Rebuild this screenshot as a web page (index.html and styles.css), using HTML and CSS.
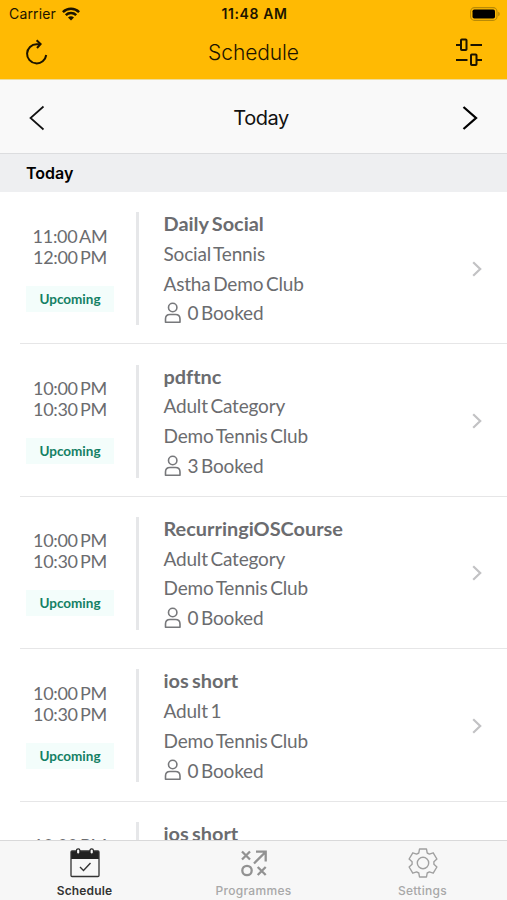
FILE: index.html
```html
<!DOCTYPE html>
<html lang="en">
<head>
  <meta charset="UTF-8" />
  <title>Schedule</title>
  <link rel="stylesheet" href="styles.css">
</head>
<body>

<!-- Header -->
<header>
  <div class="status-bar">
    <div class="carrier">
      <span>Carrier</span>
      <svg width="18" height="14" viewBox="0 0 18 14" fill="none" stroke="#1c1400" stroke-width="2.5">
        <path d="M0.9 5.2A11.5 11.5 0 0 1 17.1 5.2" />
        <path d="M3.8 8.2A7.4 7.4 0 0 1 14.2 8.2" />
        <path d="M9 13.4L6 10.6A4.4 4.4 0 0 1 12 10.6Z" fill="#1c1400" stroke="none" />
      </svg>
    </div>
    <span class="clock">11:48 AM</span>
    <svg class="battery" width="30" height="14" viewBox="0 0 30 14">
      <rect x="0.6" y="0.6" width="26.4" height="12.8" rx="4" fill="none" stroke="#b98a06" stroke-width="1.1" />
      <rect x="2.5" y="2.4" width="22.5" height="9.2" rx="1.8" fill="#000" />
      <path d="M28.2 4.7Q29.8 5.3 29.8 7T28.2 9.3Z" fill="#b98a06" />
    </svg>
  </div>
  <div class="title-bar">
    <svg width="24" height="26" viewBox="0 0 24 26" fill="none" stroke="#1c1400" stroke-width="2">
      <path d="M21.2 16A9.6 9.6 0 1 1 11.6 5.2H15" />
      <path d="M11.6 1.2L15.6 5L12 9" />
    </svg>
    <h1>Schedule</h1>
    <svg width="28" height="28" viewBox="0 0 28 28" fill="none" stroke="#1c1400" stroke-width="2">
      <path d="M1 7H5.5M15.500 7H27M1 22H12.500M22 22H27" />
      <rect x="6" y="1.500" width="5.500" height="10.500" rx="0.800" />
      <rect x="16" y="16.500" width="5.500" height="10.500" rx="0.800" />
    </svg>
  </div>
</header>

<!-- Day switcher -->
<div class="day-bar">
  <svg width="16" height="26" viewBox="0 0 16 26" fill="none" stroke="#111" stroke-width="1.7">
    <path d="M14.500 1.500L1.500 13L14.500 24.500" />
  </svg>
  <span>Today</span>
  <svg width="16" height="26" viewBox="0 0 16 26" fill="none" stroke="#000" stroke-width="2.3">
    <path d="M1.500 2L14 13L1.500 24" />
  </svg>
</div>
<div class="section-title">Today</div>

<!-- Sessions -->
<div class="sessions" id="session-list"></div>

<!-- Tabs -->
<nav>
  <a class="active">
    <svg width="30" height="30" viewBox="0 0 30 30" fill="none">
      <path d="M1 3H29V11H1Z" fill="#222" />
      <rect x="1" y="3" width="28" height="25.500" rx="1" stroke="#333" stroke-width="1.300" />
      <rect x="6.500" y="0.800" width="3.400" height="5.400" rx="1.700" fill="#f7f7f7" stroke="#222" stroke-width="1.200" />
      <rect x="20" y="0.800" width="3.400" height="5.400" rx="1.700" fill="#f7f7f7" stroke="#222" stroke-width="1.200" />
      <path d="M10 19L13.500 22.500L20.500 15" stroke="#333" stroke-width="1.400" />
    </svg>
    <span>Schedule</span>
  </a>
  <a>
    <svg width="30" height="30" viewBox="0 0 30 30" fill="none" stroke="#929292" stroke-width="2.3">
      <path d="M3 3.500L11 11.500M11 3.500L3 11.500M18.700 19L26.700 27M26.700 19L18.700 27" />
      <circle cx="8" cy="22.500" r="4.700" />
      <path d="M15 15.500L26 4.500M17 3.700H26.700V13.500" />
    </svg>
    <span>Programmes</span>
  </a>
  <a>
    <svg width="30" height="30" viewBox="-15 -15 30 30" fill="none" stroke="#a0a0a0" stroke-width="1.400" stroke-linejoin="round">
      <path d="M-4.200 -10L-3.500 -14H3.500L4.200 -10L6.400 -8.900L10.200 -10.200L13.900 -4L10.900 -1.300V1.300L13.900 4L10.200 10.200L6.400 8.900L4.200 10L3.500 14H-3.500L-4.200 10L-6.400 8.900L-10.200 10.200L-13.900 4L-10.900 1.300V-1.300L-13.900 -4L-10.200 -10.200L-6.400 -8.900Z" />
      <circle cx="0" cy="0" r="5.700" />
    </svg>
    <span>Settings</span>
  </a>
</nav>

<script>
  const sessions = [
    { name: "Daily Social", start: "11:00 AM", end: "12:00 PM", category: "Social Tennis", club: "Astha Demo Club", booked: 0 },
    { name: "pdftnc", start: "10:00 PM", end: "10:30 PM", category: "Adult Category", club: "Demo Tennis Club", booked: 3 },
    { name: "RecurringiOSCourse", start: "10:00 PM", end: "10:30 PM", category: "Adult Category", club: "Demo Tennis Club", booked: 0 },
    { name: "ios short", start: "10:00 PM", end: "10:30 PM", category: "Adult 1", club: "Demo Tennis Club", booked: 0 },
    { name: "ios short", start: "10:00 PM", end: "10:30 PM", category: "Adult 1", club: "Demo Tennis Club", booked: 0 },
  ];

  function displaySessions() {
    const list = document.getElementById("session-list");
    list.innerHTML = "";
    sessions.forEach(s => {
      const div = document.createElement("div");
      div.className = "session";
      div.innerHTML = `
        <div class="times">
          <span>${s.start}</span>
          <span>${s.end}</span>
          <span class="badge">Upcoming</span>
        </div>
        <div class="details">
          <h3>${s.name}</h3>
          <p>${s.category}</p>
          <p>${s.club}</p>
          <p class="booked">
            <svg width="18" height="22" viewBox="0 0 18 22" fill="none" stroke="#77787b" stroke-width="1.6">
              <circle cx="8.700" cy="5.500" r="4.200" />
              <path d="M1.500 20.300V17Q1.500 12.500 6 12.500H11.500Q16 12.500 16 17V20.300Z" stroke-linejoin="round" />
            </svg>
            ${s.booked} Booked
          </p>
        </div>
        <svg class="arrow" width="10" height="16" viewBox="0 0 10 16" fill="none" stroke="#c2c2c4" stroke-width="2.2">
          <path d="M1.200 1.300L8.200 8L1.200 14.700" />
        </svg>
      `;
      list.appendChild(div);
    });
  }

  // Initial load
  displaySessions();
</script>

</body>
</html>
```

FILE: styles.css
```css
body {
  font-family: Inter, 'Liberation Sans', sans-serif;
  margin: 0;
  height: 900px;
  display: flex;
  flex-direction: column;
  overflow: hidden;
  background: white;
}

svg {
  display: block;
  flex-shrink: 0;
}

header {
  background-color: #ffba03;
  color: #1c1400;
  height: 79px;
  border-bottom: 1px solid #eedd9c;
  flex-shrink: 0;
}

.status-bar {
  display: grid;
  grid-template-columns: 1fr auto 1fr;
  align-items: center;
  height: 27px;
  padding: 0 7px 0 9px;
  font-size: 14px;
}

.carrier {
  display: flex;
  align-items: center;
  gap: 6px;
  letter-spacing: 0.15px;
}

.clock {
  font-weight: 600;
  letter-spacing: 0.6px;
}

.battery {
  justify-self: end;
}

.title-bar {
  display: flex;
  justify-content: space-between;
  align-items: center;
  height: 50px;
  padding: 0 24px 0 25px;
}

.title-bar h1 {
  margin: 0;
  padding-left: 3px;
  font-size: 21px;
  font-weight: 300;
  letter-spacing: -0.1px;
}

.day-bar {
  display: flex;
  justify-content: space-between;
  align-items: center;
  height: 71px;
  padding: 2px 29px 0;
  background: #f9f9f9;
  border-bottom: 1px solid #dcdddf;
  color: #111;
  font-size: 20px;
  letter-spacing: -0.5px;
  flex-shrink: 0;
}

.day-bar span {
  padding-left: 15px;
}

.section-title {
  height: 38px;
  line-height: 38px;
  padding-left: 26px;
  background: #eeeff1;
  color: #000;
  font-size: 16px;
  font-weight: 600;
  flex-shrink: 0;
}

.sessions {
  flex: 1;
  min-height: 0;
  overflow: hidden;
  font-family: Lato, sans-serif;
  color: #6b6c6f;
}

.session {
  box-sizing: border-box;
  display: flex;
  align-items: center;
  height: 152.4px;
  margin-left: 20px;
  padding: 2px 25px 0 6px;
  border-bottom: 1px solid #e6e6e7;
}

.times {
  width: 88px;
  display: flex;
  flex-direction: column;
  align-items: center;
  padding-top: 1px;
  font-size: 18px;
  line-height: 21px;
  letter-spacing: -0.3px;
  word-spacing: -2px;
}

.badge {
  width: 88px;
  margin-top: 18px;
  margin-bottom: 1px;
  background: #f3fdfb;
  color: #138064;
  font-size: 13.5px;
  font-weight: bold;
  letter-spacing: 0;
  line-height: 26px;
  text-align: center;
}

.details {
  display: flex;
  flex-direction: column;
  justify-content: center;
  flex: 1;
  height: 113px;
  margin-left: 22px;
  padding-left: 24.5px;
  border-left: 3px solid #e6e7e9;
  line-height: 29.7px;
}

.details h3 {
  margin: 0;
  font-size: 19.9px;
  font-variant-ligatures: none;
  word-spacing: -1.5px;
}

.details p {
  margin: 0;
  font-size: 19px;
  letter-spacing: -0.18px;
  word-spacing: -2px;
}

.details .booked {
  display: flex;
  align-items: center;
  gap: 6px;
}

nav {
  box-sizing: border-box;
  display: flex;
  height: 60px;
  background: #f7f7f7;
  border-top: 1px solid #d9d9da;
  flex-shrink: 0;
}

nav a {
  flex: 1;
  display: flex;
  flex-direction: column;
  align-items: center;
  gap: 5px;
  padding-top: 7px;
  color: #a8a8a8;
  font-size: 12px;
  font-weight: 500;
  letter-spacing: 0.3px;
  line-height: 15px;
}

nav .active {
  color: #333;
  font-weight: 600;
  letter-spacing: 0.15px;
}
```
